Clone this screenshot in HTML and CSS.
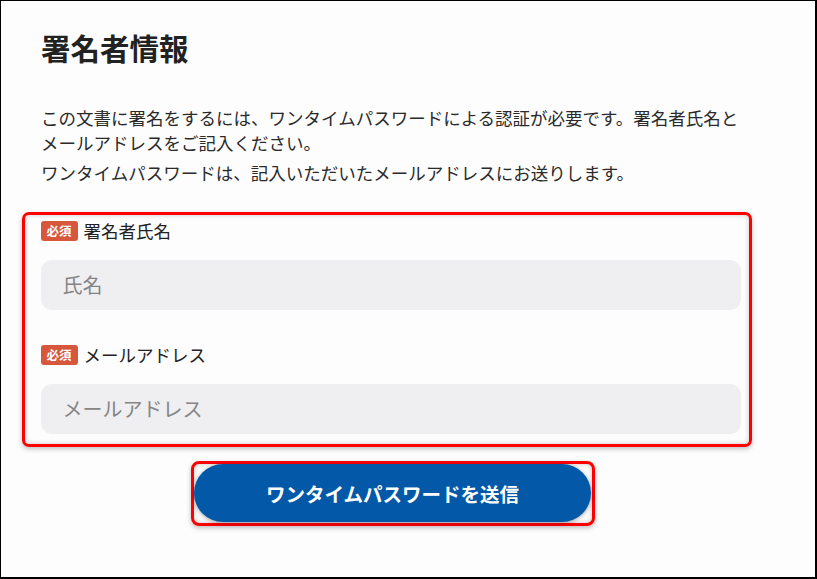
FILE: index.html
```
<!DOCTYPE html>
<html lang="ja">

<head>
    <meta charset="UTF-8">
    <title>署名者情報</title>
    <link rel="stylesheet" href="styles.css">
</head>

<body>
    <div class="frame">
        <div class="content">
            <h1 class="title">署名者情報</h1>
            <p class="lead">この文書に署名をするには、ワンタイムパスワードによる認証が必要です。署名者氏名と<br>メールアドレスをご記入ください。</p>
            <p class="lead lead-next">ワンタイムパスワードは、記入いただいたメールアドレスにお送りします。</p>

            <div class="mark form-box">
                <div class="field">
                    <label class="label"><span class="badge">必須</span>署名者氏名</label>
                    <input class="input" type="text" placeholder="氏名">
                </div>
                <div class="field">
                    <label class="label"><span class="badge">必須</span>メールアドレス</label>
                    <input class="input" type="email" placeholder="メールアドレス">
                </div>
            </div>

            <div class="submit-row">
                <div class="mark btn-box">
                    <button class="send-btn">ワンタイムパスワードを送信</button>
                </div>
            </div>
        </div>
    </div>
</body>

</html>
```

FILE: styles.css
```
body {
    margin: 0;
    font-family: "Noto Sans CJK JP", "Noto Sans", sans-serif;
    color: #222;
}

.frame {
    width: 817px;
    height: 579px;
    box-sizing: border-box;
    border: solid #000;
    border-width: 1px 2px 2px 1px;
    background: #fdfdfe;
    overflow: hidden;
}

.content {
    width: 700px;
    padding: 28px 0 0 40px;
}

.title {
    margin: 0;
    font-size: 29.5px;
    line-height: 36px;
    font-weight: 700;
    color: #222;
}

.lead {
    margin: 41px 0 0 0;
    width: 760px;
    font-size: 17.5px;
    line-height: 24.5px;
    color: #2a2a2a;
}

.lead-next {
    margin-top: 6px;
}

/* red highlight frames */
.mark {
    border: 3.5px solid #ff0000;
    border-radius: 7px;
    box-shadow: 0 2px 5px rgba(0, 0, 0, 0.25), inset 0 0 5px rgba(0, 0, 0, 0.22);
}

.form-box {
    margin: 26px 0 0 -19px;
    width: 730px;
    box-sizing: border-box;
    padding: 6px 8px 10px 15.5px;
    display: flex;
    flex-direction: column;
    gap: 35px;
}

.field {
    display: flex;
    flex-direction: column;
    gap: 19px;
}

.label {
    display: flex;
    align-items: center;
    height: 20px;
    font-size: 17.5px;
    color: #222;
}

.badge {
    display: inline-flex;
    align-items: center;
    justify-content: center;
    width: 37px;
    height: 20px;
    margin-right: 6px;
    border-radius: 3px;
    background: #d6573b;
    color: #fff;
    font-size: 12.5px;
    font-weight: 700;
}

.input {
    width: 700px;
    height: 50px;
    box-sizing: border-box;
    border: none;
    border-radius: 11px;
    background: #efeff2;
    padding: 0 22px;
    font-family: inherit;
    font-size: 20px;
    color: #222;
    outline: none;
}

.input::placeholder {
    color: #858585;
}

.submit-row {
    display: flex;
    justify-content: center;
    margin-top: 14px;
}

.btn-box {
    padding: 0.5px;
    border-radius: 8px;
    margin-left: 3px;
}

.send-btn {
    display: block;
    width: 397px;
    height: 58px;
    border: none;
    border-radius: 29px;
    background: #0358a8;
    color: #fff;
    font-family: inherit;
    font-size: 19.5px;
    font-weight: 700;
    box-shadow: 0 1px 4px rgba(0, 0, 0, 0.35);
    cursor: pointer;
}
```
